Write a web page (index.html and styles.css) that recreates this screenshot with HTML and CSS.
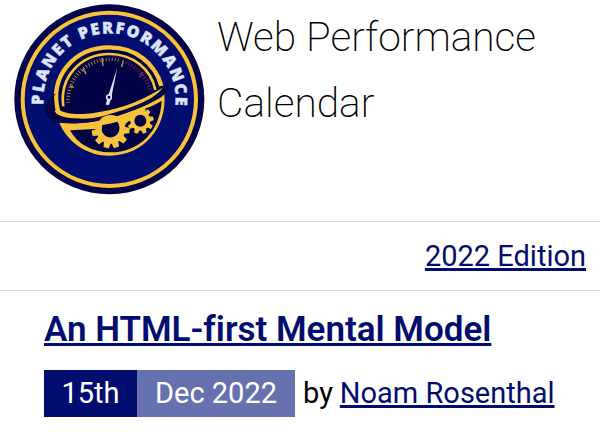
FILE: index.html
```html
<!DOCTYPE html>
<html lang="en">
<head>
<meta charset="utf-8">
<title>Web Performance Calendar</title>
<link rel="stylesheet" href="styles.css">
</head>
<body>
<header class="masthead">
<svg class="logo" viewBox="0 0 600 600" role="img" aria-label="Planet Performance">
  <defs>
    <path id="arc" d="M100.5 314A198.5 198.5 0 1 1 494 332"/>
    <path id="tooth" d="M-11-38L-8-57H8L11-38Z"/>
  </defs>
  <circle cx="298" cy="298" r="285" fill="#02034a"/>
  <circle cx="298" cy="298" r="260" fill="#020d70" stroke="#f8c33b" stroke-width="12"/>
  <text class="ring-text"><textPath href="#arc" textLength="657" lengthAdjust="spacing">PLANET PERFORMANCE</textPath></text>
  <circle cx="299" cy="301" r="164" fill="#010345"/>
  <path d="M144 333C118 230 190 142 299 142C376 142 436 190 454 258" fill="none" stroke="#f8c33b" stroke-width="13"/>
  <path d="M160 319C148 233 211 162 298 162C369 162 424 208 436 270" fill="none" stroke="#f8c33b" stroke-width="8"/>
  <path d="M174 308A125 125 0 0 1 326 181" fill="none" stroke="#b99238" stroke-width="11" stroke-dasharray="2.5 6.5"/>
  <path d="M348 187A125 125 0 0 1 419 268" fill="none" stroke="#792052" stroke-width="11" stroke-dasharray="3 6"/>
  <path d="M179 257L191 263M218 206L229 222M276 174L279 198M340 181L335 201" stroke="#c69b38" stroke-width="4"/>
  <path d="M399 217L387 232" stroke="#8c2555" stroke-width="4"/>
  <path d="M148 368C239 379 367 346 463 283C472 382 401 467 299 467C230 467 174 428 148 368Z" fill="#f8c33b"/>
  <path d="M180 391C204 434 247 457 301 457C389 457 451 393 455 302C443 310 426 319 407 325L404 343L349 366L341 387H249L241 388Z" fill="#010345"/>
  <path d="M132 284C103 307 99 339 118 354C128 363 138 366 150 367C180 372 210 371 240 367C280 361 310 350 340 340C390 326 429 307 455 290C474 276 482 259 470 244C464 266 437 285 405 300C350 326 285 347 220 348C180 348 148 342 134 332Z" fill="#010345"/>
  <path d="M142 324C155 340 190 343 220 342C255 340 290 333 320 325C359 314 391 300 420 285C438 276 450 269 460 262C447 279 434 288 420 296C391 311 356 325 320 336C287 347 253 356 220 356C180 356 144 353 134 334Z" fill="#f8c33b"/>
  <path d="M436 207C467 204 484 233 466 264C436 312 292 365 178 367C111 368 96 324 137 281" fill="none" stroke="#100c43" stroke-width="3"/>
  <g fill="#f8c33b">
    <g transform="translate(302 388)"><circle r="43"/><use href="#tooth" transform="rotate(58)"/><use href="#tooth" transform="rotate(94)"/><use href="#tooth" transform="rotate(130)"/><use href="#tooth" transform="rotate(162)"/><use href="#tooth" transform="rotate(194)"/><use href="#tooth" transform="rotate(226)"/><use href="#tooth" transform="rotate(258)"/></g>
    <g transform="translate(391 362) scale(.7)"><circle r="43"/><use href="#tooth" transform="rotate(40)"/><use href="#tooth" transform="rotate(80)"/><use href="#tooth" transform="rotate(120)"/><use href="#tooth" transform="rotate(160)"/><use href="#tooth" transform="rotate(200)"/><use href="#tooth" transform="rotate(240)"/><use href="#tooth" transform="rotate(280)"/></g>
  </g>
  <path d="M277 375C289 374 308 369 322 365C331 376 330 393 322 403C307 420 279 412 275 390Z" fill="#010345"/>
  <circle cx="391" cy="362" r="18" fill="#010345"/>
  <path d="M322 203L304 292L297 315L287 314L295 286Z" fill="#dce1ff"/>
  <circle cx="297" cy="292" r="7" fill="#010345" stroke="#dce1ff" stroke-width="5"/>
</svg>
<h1 class="site-title">Web Performance<br>Calendar</h1>
</header>
<nav class="edition"><a href="#">2022 Edition</a></nav>
<main class="post">
<h2 class="post-title"><a href="#">An HTML-first Mental Model</a></h2>
<div class="meta"><span class="day">15th</span><span class="month">Dec 2022</span><span class="by">by</span><a class="author" href="#">Noam Rosenthal</a></div>
</main>
</body>
</html>
```
FILE: styles.css
```css
* { box-sizing: border-box; }
body { margin: 0; background: #fff; color: #000; font-family: Roboto, sans-serif; overflow: hidden; }
a { color: #020d70; text-decoration-thickness: 3px; text-underline-offset: 2px; text-decoration-skip-ink: none; }
.masthead { display: flex; height: 221px; padding-left: 10px; }
.logo { width: 200px; height: 200px; flex: none; overflow: visible; }
.ring-text { font: 800 48px "Open Sans", sans-serif; fill: #dce4ff; stroke: #dce4ff; stroke-width: 1.5px; }
.site-title { margin: 5px 0 0 7px; font-size: 40.7px; line-height: 65.5px; font-weight: 200; white-space: nowrap; }
.edition { height: 70px; padding-right: 14px; border-top: 1px solid #d8d8d8; border-bottom: 1px solid #d8d8d8; text-align: right; font-size: 29px; line-height: 68px; }
.post { padding: 18px 0 0 44px; }
.post-title { margin: 0; font-size: 35px; font-weight: 600; line-height: 42px; font-variant-ligatures: none; white-space: nowrap; }
.meta { display: flex; margin-top: 19px; font-size: 29px; line-height: 47px; white-space: nowrap; }
.day, .month { color: #fff; text-align: center; }
.day { width: 93px; background: #020d70; }
.month { width: 158px; background: #6672b0; }
.by { margin: 0 7px 0 8px; }
```
